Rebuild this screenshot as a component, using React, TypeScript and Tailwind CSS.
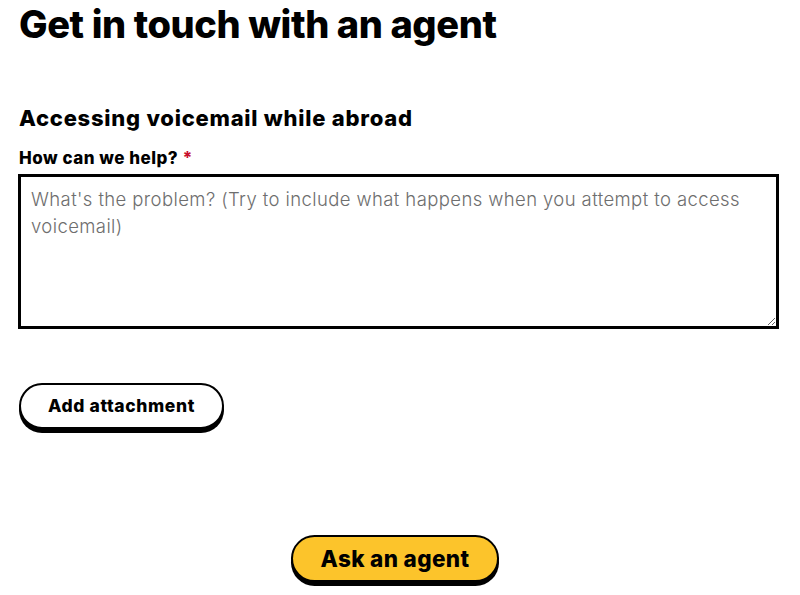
export default function App() {
  return (
    <div className="min-h-[595px] bg-white px-[19px] text-black" style={{ fontFamily: "Inter, 'Noto Sans', sans-serif" }}>
      <h1 className="pt-[2px] text-[38px] font-extrabold leading-[44px] tracking-[-0.4px]">Get in touch with an agent</h1>

      <h2 className="mt-[58px] text-[22px] font-extrabold leading-[28px] tracking-[0.75px]">Accessing voicemail while abroad</h2>

      <label htmlFor="help" className="mt-[15px] block text-[17px] font-extrabold leading-[22px] tracking-[0.5px]">
        How can we help? <span className="text-[#c8102e]">*</span>
      </label>

      <textarea
        id="help"
        className="mt-[5px] block h-[155px] w-[761px] -ml-px resize-y border-[3px] border-black px-[10px] py-[9px] text-[18.5px] font-light leading-[27px] tracking-[0.4px] text-black outline-none placeholder:text-[#6e6e6e]"
        placeholder="What's the problem? (Try to include what happens when you attempt to access voicemail)"
      />

      <button className="mt-[54px] flex h-[46px] w-[205px] items-center justify-center rounded-full border-2 border-black bg-white text-[17.5px] font-extrabold tracking-[0.6px] shadow-[0_4px_0_#000]">
        Add attachment
      </button>

      <div className="mt-[106px] flex justify-center pr-[10px]">
        <button className="flex h-[47px] w-[208px] items-center justify-center rounded-full border-2 border-black bg-[#fcc42b] text-[22.5px] font-extrabold tracking-[0.35px] shadow-[0_4px_0_#000]">
          Ask an agent
        </button>
      </div>
    </div>
  );
}
